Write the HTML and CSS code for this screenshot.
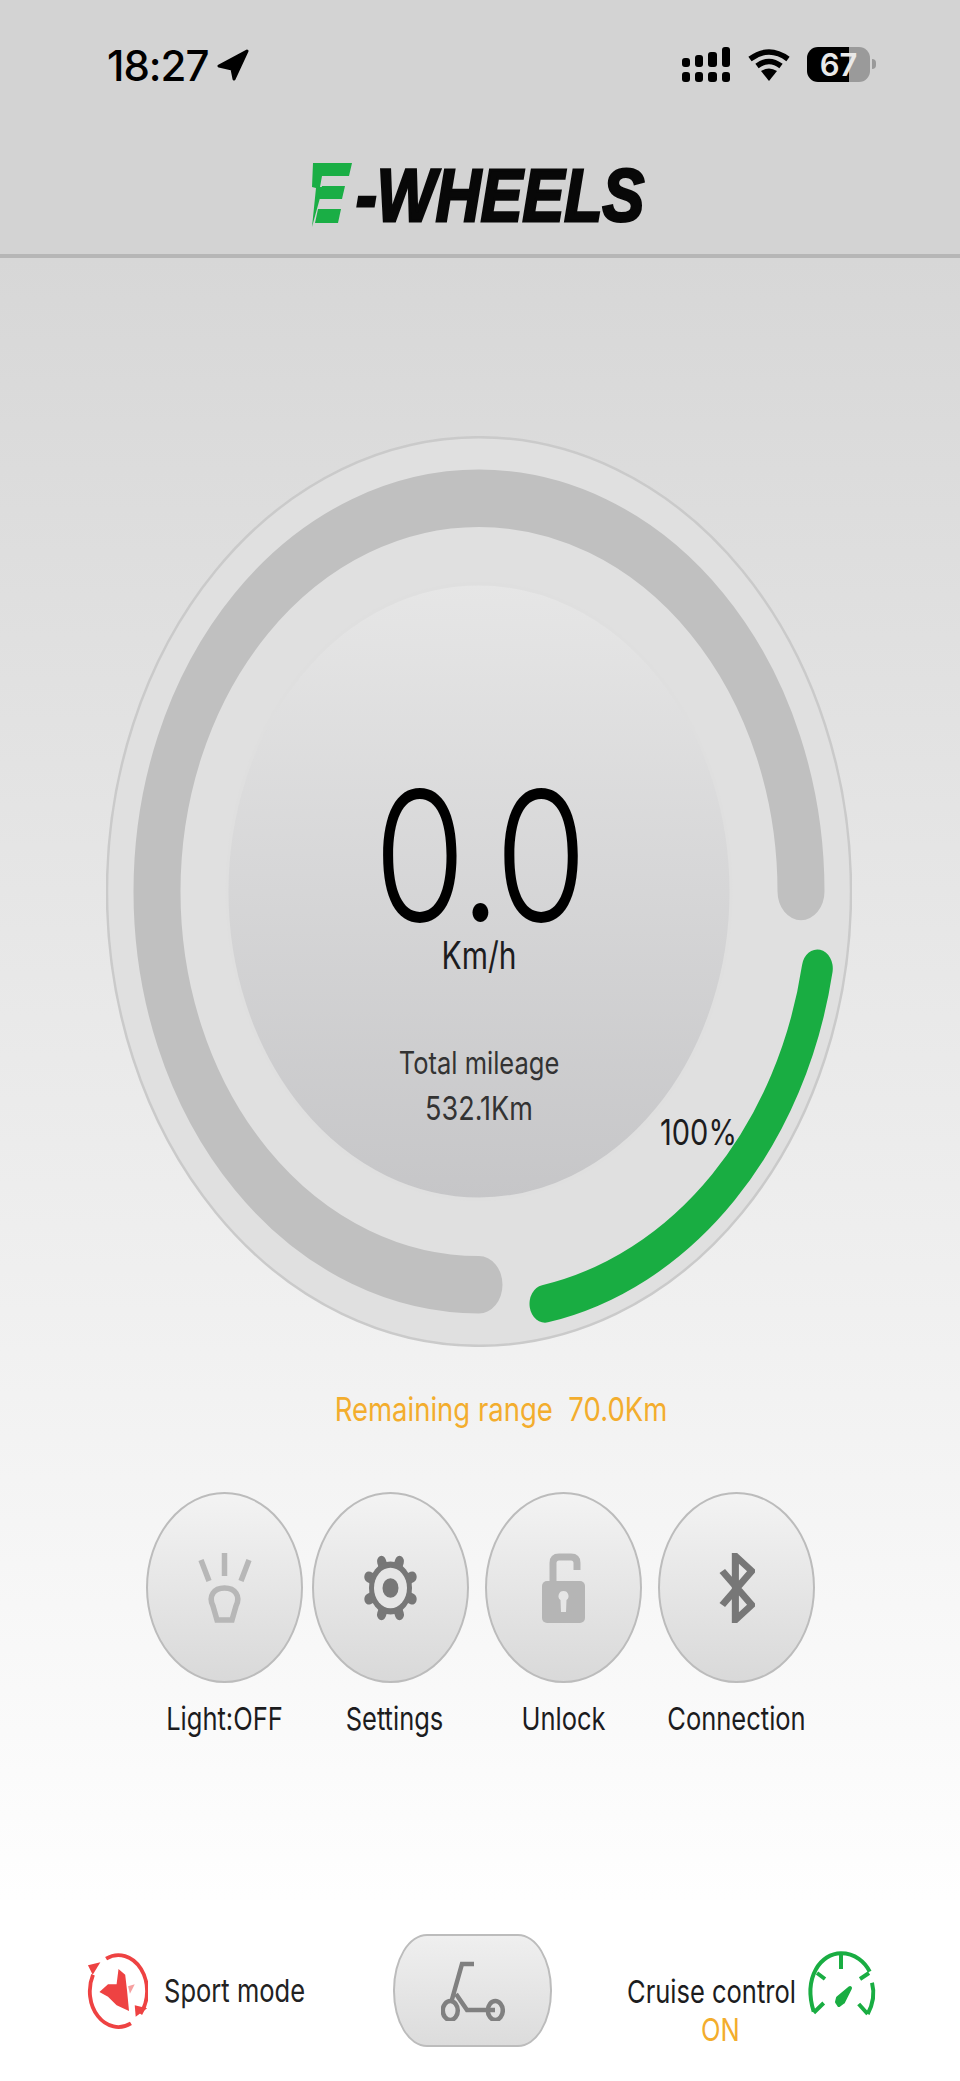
FILE: index.html
```html
<!DOCTYPE html>
<html lang="en">
<head>
    <meta charset="UTF-8">
    <meta name="viewport" content="width=device-width, initial-scale=1.0">
    <title>E-Wheels</title>
    <link rel="stylesheet" href="styles.css">
</head>
<body>
    <header class="top">
        <div class="status">
            <div class="status-left">
                <span class="time">18:27</span>
                <svg class="arrow" viewBox="0 0 32 32"><path d="M30 2 L2 17 L15 20 L17 30 Z"/></svg>
            </div>
            <div class="status-right">
                <svg class="signal" viewBox="0 0 48 35">
                    <rect x="0" y="11" width="8" height="9" rx="3"/>
                    <rect x="13" y="8" width="8" height="12" rx="3"/>
                    <rect x="26" y="5" width="9" height="15" rx="3"/>
                    <rect x="40" y="0" width="8" height="20" rx="3"/>
                    <rect x="0" y="25" width="8" height="10" rx="3"/>
                    <rect x="13" y="25" width="8" height="10" rx="3"/>
                    <rect x="26" y="25" width="9" height="10" rx="3"/>
                    <rect x="40" y="25" width="8" height="10" rx="3"/>
                </svg>
                <svg class="wifi" viewBox="0 0 44 33">
                    <path class="wifi-arc" d="M3 11 Q22 -3 41 11"/>
                    <path class="wifi-arc" d="M10 18 Q22 9 34 18"/>
                    <path d="M14 23 Q22 18 30 23 L22 33 Z"/>
                </svg>
                <div class="battery">67</div>
            </div>
        </div>
        <div class="logo">
            <svg class="logo-mark" viewBox="0 0 40 64" role="img" aria-label="E">
                <polygon class="green" points="1,0 40,0 37,13 10,13 8,24 11,24 0,64 4,25 0,24"/>
                <polygon class="green" points="10,23 33,23 30,36 7,36"/>
                <polygon class="green" points="6,46 29,46 26,60 3,60"/>
            </svg>
            <span class="logo-text">-WHEELS</span>
        </div>
    </header>

    <main class="dash">
        <div class="gauge">
            <svg class="gauge-rings" viewBox="0 0 746 746" preserveAspectRatio="none">
                <defs>
                    <linearGradient id="disc" x1="0" y1="0" x2="0" y2="1">
                        <stop offset="0" stop-color="#e6e6e6"/>
                        <stop offset="1" stop-color="#c6c6c8"/>
                    </linearGradient>
                </defs>
                <circle class="ring-outer" cx="373" cy="373" r="372"/>
                <path class="track" d="M373 695 A322 322 0 1 1 695 373"/>
                <path class="level" d="M711.3 436 A344 344 0 0 1 439 710.6"/>
                <circle class="ring-inner" cx="373" cy="373" r="252"/>
            </svg>
            <div class="gauge-text">
                <div class="speed">0.0</div>
                <div class="unit">Km/h</div>
                <div class="mileage">Total mileage</div>
                <div class="mileage-value">532.1Km</div>
            </div>
            <span class="percent">100%</span>
        </div>

        <p class="range">Remaining range&nbsp; 70.0Km</p>

        <div class="actions">
            <div class="action">
                <div class="round-btn">
                    <svg class="icon-light" viewBox="0 0 54 72">
                        <path d="M26.5 1 V24 M3 8 L11 29 M51 8 L43 29"/>
                        <path d="M19 68 L15 54 C10 44 16 36 26.5 36 C37 36 43 44 38 54 L34 68 Z"/>
                    </svg>
                </div>
                <span class="label">Light:OFF</span>
            </div>
            <div class="action">
                <div class="round-btn">
                    <svg class="icon-gear" viewBox="0 0 57 57" preserveAspectRatio="none">
                        <g class="gear-teeth">
                            <path d="M28.5 5 V52 M5 28.5 H52 M11.9 11.9 L45.1 45.1 M45.1 11.9 L11.9 45.1"/>
                        </g>
                        <circle class="gear-body" cx="28.5" cy="28.5" r="21.5"/>
                        <circle class="gear-ring" cx="28.5" cy="28.5" r="16.5"/>
                        <circle class="gear-body" cx="28.5" cy="28.5" r="8"/>
                    </svg>
                </div>
                <span class="label label-shift">Settings</span>
            </div>
            <div class="action action-gap">
                <div class="round-btn">
                    <svg class="icon-lock" viewBox="0 0 43 70">
                        <path class="lock-shackle" d="M11 30 V10 Q11 4 17 4 H29 Q35 4 35 10 V17"/>
                        <rect class="lock-body" x="0" y="28" width="43" height="42" rx="5"/>
                        <path class="lock-hole" d="M21.5 38 a5 5 0 0 1 3 9 L24 59 H19 L18.500 47 a5 5 0 0 1 3 -9 Z"/>
                    </svg>
                </div>
                <span class="label">Unlock</span>
            </div>
            <div class="action action-gap">
                <div class="round-btn">
                    <svg class="icon-bt" viewBox="0 0 33 70" preserveAspectRatio="none">
                        <path d="M3 18 L30 52 L15 67 V3 L30 18 L3 52"/>
                    </svg>
                </div>
                <span class="label">Connection</span>
            </div>
        </div>
    </main>

    <footer class="bottom">
        <div class="sport">
            <svg class="icon-sport" viewBox="0 0 64 79">
                <path class="sport-arc" d="M20 6.200 A30 37.500 0 0 1 56 64"/>
                <path class="sport-arc" d="M6.300 23 A30 37.500 0 0 0 46 74"/>
                <polygon points="1,13 14,10 6,23"/>
                <polygon points="51,67 63,58 50,55"/>
                <polygon points="13,41 22,33 31,33 33,17 40,23 42,40 44,61 31,55 22,46"/>
                <polygon class="sport-feather" points="43,35 50,33 45,43"/>
            </svg>
            <span class="label">Sport mode</span>
        </div>
        <div class="scooter-btn">
            <svg class="icon-scooter" viewBox="0 0 64 60">
                <path class="scooter-line" d="M33 3 H21 L10 42"/>
                <path class="scooter-line" d="M15 33 L26 49 H54"/>
                <ellipse class="scooter-line" cx="9.300" cy="49.500" rx="7.500" ry="9.500"/>
                <ellipse class="scooter-line" cx="54.300" cy="49.500" rx="7.500" ry="9.500"/>
            </svg>
        </div>
        <div class="cruise">
            <div class="cruise-text">
                <span class="label">Cruise control</span>
                <span class="label on">ON</span>
            </div>
            <svg class="icon-cruise" viewBox="0 0 65 63">
                <path d="M4.700 59.700 C-6 25 12 1.300 32 1.300 C46 1.300 56 10 60.700 19.700"/>
                <path d="M63 30.700 C66 42 64 52 58.700 62"/>
                <path d="M32 1.300 V17 M8 21 L16 27 M60 21 L51 27 M4.700 60.700 L14.700 51 M58.700 62 L49.700 52"/>
                <polygon points="41,36 34,50 30,53 28,50 29,46"/>
            </svg>
        </div>
    </footer>
</body>
</html>
```

FILE: styles.css
```css
* {
    box-sizing: border-box;
}

body {
    font-family: Inter, 'Liberation Sans', sans-serif;
    margin: 0;
    width: 960px;
    height: 2081px;
    overflow: hidden;
    color: #1c1c1e;
    background: #fff;
}

/* header */
.top {
    height: 258px;
    background: #d3d3d3;
    border-bottom: 4px solid #b6b6b6;
    padding-top: 47px;
}

.status {
    display: flex;
    justify-content: space-between;
    padding: 0 90px 0 107px;
    height: 35px;
}

.status-left {
    display: flex;
    align-items: center;
    gap: 9px;
}

.time {
    font-size: 42px;
    font-weight: 500;
    line-height: 35px;
    color: #000;
    letter-spacing: -1px;
    padding-top: 2px;
}

.arrow {
    width: 32px;
    height: 32px;
    fill: #000;
    stroke: #000;
    stroke-width: 3;
    stroke-linejoin: round;
}

.status-right {
    display: flex;
    align-items: center;
}

.signal {
    width: 48px;
    height: 35px;
    fill: #000;
}

.wifi {
    width: 44px;
    height: 33px;
    margin-left: 17px;
    fill: #000;
}

.wifi-arc {
    fill: none;
    stroke: #000;
    stroke-width: 5.5;
}

.battery {
    position: relative;
    width: 63px;
    height: 35px;
    margin-left: 16px;
    border-radius: 11px;
    background: linear-gradient(90deg, #000 67%, #9a9a9a 67%);
    color: #e9e9e9;
    font-size: 31px;
    font-weight: 600;
    line-height: 35px;
    text-align: center;
}

.battery::after {
    content: "";
    position: absolute;
    right: -6px;
    top: 12px;
    width: 4px;
    height: 10px;
    border-radius: 0 4px 4px 0;
    background: #9a9a9a;
}

.logo {
    display: flex;
    justify-content: center;
    align-items: flex-start;
    margin-top: 81px;
    padding-right: 4px;
}

.logo-mark {
    width: 40px;
    height: 64px;
}

.green {
    fill: #1aae45;
}

.logo-text {
    font-family: 'Liberation Sans', Arial, sans-serif;
    font-size: 62.5px;
    font-weight: 700;
    font-style: italic;
    line-height: 64px;
    margin-left: 4px;
    color: #080808;
    -webkit-text-stroke: 2.5px #080808;
    transform: scaleY(1.2);
}

/* gauge */
.dash {
    height: 1642px;
    padding-top: 178px;
    background: linear-gradient(180deg, #d7d7d7, #fefefe);
}

.gauge {
    position: relative;
    width: 746px;
    height: 911px;
    margin-left: 106px;
}

.gauge-rings {
    display: block;
    width: 746px;
    height: 911px;
}

.ring-outer {
    fill: #e0e0e0;
    stroke: #cacaca;
    stroke-width: 2.5;
    vector-effect: non-scaling-stroke;
}

.track {
    fill: none;
    stroke: #c0c0c0;
    stroke-width: 47;
    stroke-linecap: round;
}

.level {
    fill: none;
    stroke: #19ad42;
    stroke-width: 31;
    stroke-linecap: round;
}

.ring-inner {
    fill: url(#disc);
    stroke: #dfdfdf;
    stroke-width: 3;
}

.gauge-text {
    position: absolute;
    top: 0;
    left: 0;
    width: 100%;
    padding-top: 350px;
    text-align: center;
}

.speed {
    font-size: 150px;
    font-weight: 350;
    line-height: 140px;
    color: #000;
    letter-spacing: -3px;
    transform: scaleY(1.2);
}

.unit {
    margin-top: 11px;
    font-size: 30px;
    line-height: 36px;
    transform: scaleY(1.25);
}

.mileage {
    margin-top: 74px;
    font-size: 25.5px;
    line-height: 32px;
    color: #333;
    transform: scaleY(1.2);
}

.mileage-value {
    margin-top: 14px;
    font-size: 27px;
    line-height: 32px;
    color: #333;
    transform: scaleY(1.2);
}

.percent {
    position: absolute;
    left: 554px;
    top: 680px;
    font-size: 29px;
    line-height: 34px;
    transform: scaleY(1.2);
}

.range {
    margin: 44px 0 0;
    padding-left: 42px;
    text-align: center;
    font-size: 27.5px;
    line-height: 36px;
    color: #f3ad2d;
    transform: scaleY(1.2);
}

/* round buttons */
.actions {
    display: flex;
    gap: 9px;
    margin: 65px 0 0 146px;
}

.action {
    display: flex;
    flex-direction: column;
    align-items: center;
    width: 157px;
}

.action-gap {
    margin-left: 7px;
}

.round-btn {
    display: flex;
    align-items: center;
    justify-content: center;
    width: 157px;
    height: 191px;
    border: 2.5px solid #bcbcbc;
    border-radius: 50%;
    background: linear-gradient(180deg, #f3f3f3, #d9d9d9);
}

.label {
    display: inline-block;
    font-size: 25.5px;
    line-height: 32px;
    white-space: nowrap;
    transform: scaleY(1.25);
}

.action .label {
    margin-top: 20px;
}

.action .label-shift {
    margin-left: 8px;
}

.icon-light {
    width: 54px;
    height: 72px;
    fill: none;
    stroke: #b7b7b7;
    stroke-width: 5.5;
}

.icon-gear {
    width: 57px;
    height: 70px;
}

.gear-teeth {
    fill: none;
    stroke: #777;
    stroke-width: 9;
    stroke-linecap: round;
    transform: rotate(22.5deg);
    transform-origin: 28.5px 28.5px;
}

.gear-body {
    fill: #777;
}

.gear-ring {
    fill: #e6e6e6;
}

.icon-lock {
    width: 43px;
    height: 70px;
}

.lock-shackle {
    fill: none;
    stroke: #b5b5b5;
    stroke-width: 7;
}

.lock-body {
    fill: #b5b5b5;
}

.lock-hole {
    fill: #e6e6e6;
}

.icon-bt {
    width: 36px;
    height: 70px;
    fill: none;
    stroke: #777;
    stroke-width: 6.5;
}

/* bottom bar */
.bottom {
    display: flex;
    align-items: center;
    height: 181px;
    padding-left: 87px;
    background: #fff;
}

.sport {
    display: flex;
    align-items: center;
    gap: 16px;
    width: 218px;
    color: #222;
}

.icon-sport {
    width: 64px;
    height: 79px;
    fill: #ee4242;
}

.sport-arc {
    fill: none;
    stroke: #ee4242;
    stroke-width: 4;
}

.sport-feather {
    opacity: 0.5;
}

.scooter-btn {
    display: flex;
    align-items: center;
    justify-content: center;
    width: 159px;
    height: 113px;
    margin-left: 88px;
    border: 2.5px solid #bcbcbc;
    border-radius: 34px / 56px;
    background: linear-gradient(180deg, #efefef, #dcdcdc);
}

.icon-scooter {
    width: 64px;
    height: 60px;
}

.scooter-line {
    fill: none;
    stroke: #808080;
    stroke-width: 4.5;
}

.cruise {
    display: flex;
    align-items: flex-start;
    align-self: flex-start;
    gap: 13px;
    margin: 52px 0 0 75px;
}

.cruise-text {
    display: flex;
    flex-direction: column;
    align-items: center;
    padding-top: 24px;
}

.on {
    margin: 6px 0 0 18px;
    color: #f3ad2d;
}

.icon-cruise {
    width: 65px;
    height: 63px;
    overflow: visible;
    fill: #19ad42;
    stroke: #19ad42;
    stroke-width: 4;
    stroke-linejoin: round;
}

.icon-cruise path {
    fill: none;
}
```
